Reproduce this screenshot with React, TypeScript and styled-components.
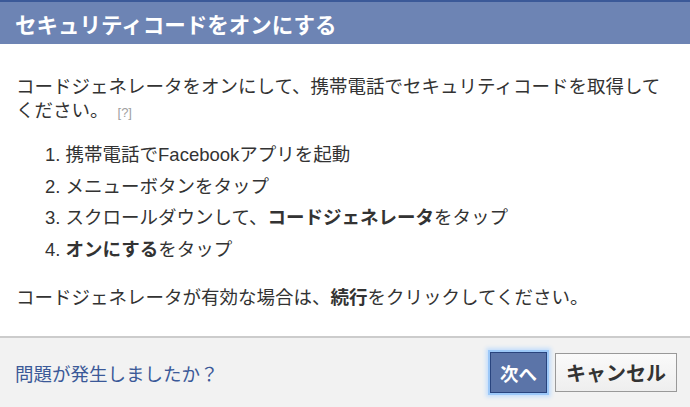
import styled, { createGlobalStyle } from "styled-components";

const GlobalStyle = createGlobalStyle`
  html, body {
    margin: 0;
    padding: 0;
    background: #ffffff;
  }
  body {
    font-family: "Liberation Sans", "Noto Sans CJK JP", sans-serif;
  }
`;

const Dialog = styled.div`
  width: 690px;
  height: 407px;
  display: flex;
  flex-direction: column;
  background: #ffffff;
  overflow: hidden;
`;

const Header = styled.div`
  height: 42px;
  border-top: 2px solid #3b5998;
  background: #6d84b4;
  display: flex;
  align-items: center;
  padding: 0 15px;
`;

const Title = styled.h2`
  margin: 0;
  color: #ffffff;
  font-size: 21.5px;
  font-weight: bold;
`;

const Body = styled.div`
  flex: 1;
  padding: 31px 16px 0 16px;
  color: #333333;
  font-size: 18.5px;
`;

const Paragraph = styled.p`
  margin: 0;
  line-height: 24px;
`;

const Help = styled.span`
  display: inline-block;
  color: #a0a0a0;
  font-size: 13px;
  line-height: 13px;
  margin-left: 9px;
`;

const Steps = styled.ol`
  list-style: none;
  margin: 16px 0 21px 0;
  padding: 0 0 0 29px;
`;

const Step = styled.li`
  line-height: 31.5px;
`;

const Footer = styled.div`
  height: 69px;
  border-top: 2px solid #cccccc;
  background: #f2f2f2;
  display: flex;
  align-items: center;
  justify-content: space-between;
  padding: 0 13px 0 15px;
`;

const Link = styled.a`
  color: #3b5998;
  font-size: 18.5px;
  text-decoration: none;
`;

const Buttons = styled.div`
  display: flex;
  align-items: center;
  gap: 8px;
`;

const Button = styled.button<{ $primary?: boolean }>`
  font-family: "Liberation Sans", "Noto Sans CJK JP", sans-serif;
  font-weight: bold;
  font-size: ${(p) => (p.$primary ? "18.5px" : "20px")};
  height: ${(p) => (p.$primary ? "41px" : "39px")};
  padding: 0 ${(p) => (p.$primary ? "9px" : "10px")};
  color: ${(p) => (p.$primary ? "#ffffff" : "#333333")};
  background: ${(p) =>
    p.$primary ? "#5b74a8" : "linear-gradient(#fafafa, #eeeeee)"};
  border: 1px solid ${(p) => (p.$primary ? "#29447e" : "#999999")};
  box-shadow: ${(p) =>
    p.$primary ? "0 0 0 2px #9cc8f8, 0 0 4px 4px #c4defb" : "none"};
  border-radius: 0;
  cursor: pointer;
`;

export default function App() {
  return (
    <>
      <GlobalStyle />
      <Dialog>
        <Header>
          <Title>セキュリティコードをオンにする</Title>
        </Header>
        <Body>
          <Paragraph>
            コードジェネレータをオンにして、携帯電話でセキュリティコードを取得してください。
            <Help>[?]</Help>
          </Paragraph>
          <Steps>
            <Step>1. 携帯電話でFacebookアプリを起動</Step>
            <Step>2. メニューボタンをタップ</Step>
            <Step>
              3. スクロールダウンして、<b>コードジェネレータ</b>をタップ
            </Step>
            <Step>
              4. <b>オンにする</b>をタップ
            </Step>
          </Steps>
          <Paragraph>
            コードジェネレータが有効な場合は、<b>続行</b>をクリックしてください。
          </Paragraph>
        </Body>
        <Footer>
          <Link href="#">問題が発生しましたか？</Link>
          <Buttons>
            <Button $primary>次へ</Button>
            <Button>キャンセル</Button>
          </Buttons>
        </Footer>
      </Dialog>
    </>
  );
}
